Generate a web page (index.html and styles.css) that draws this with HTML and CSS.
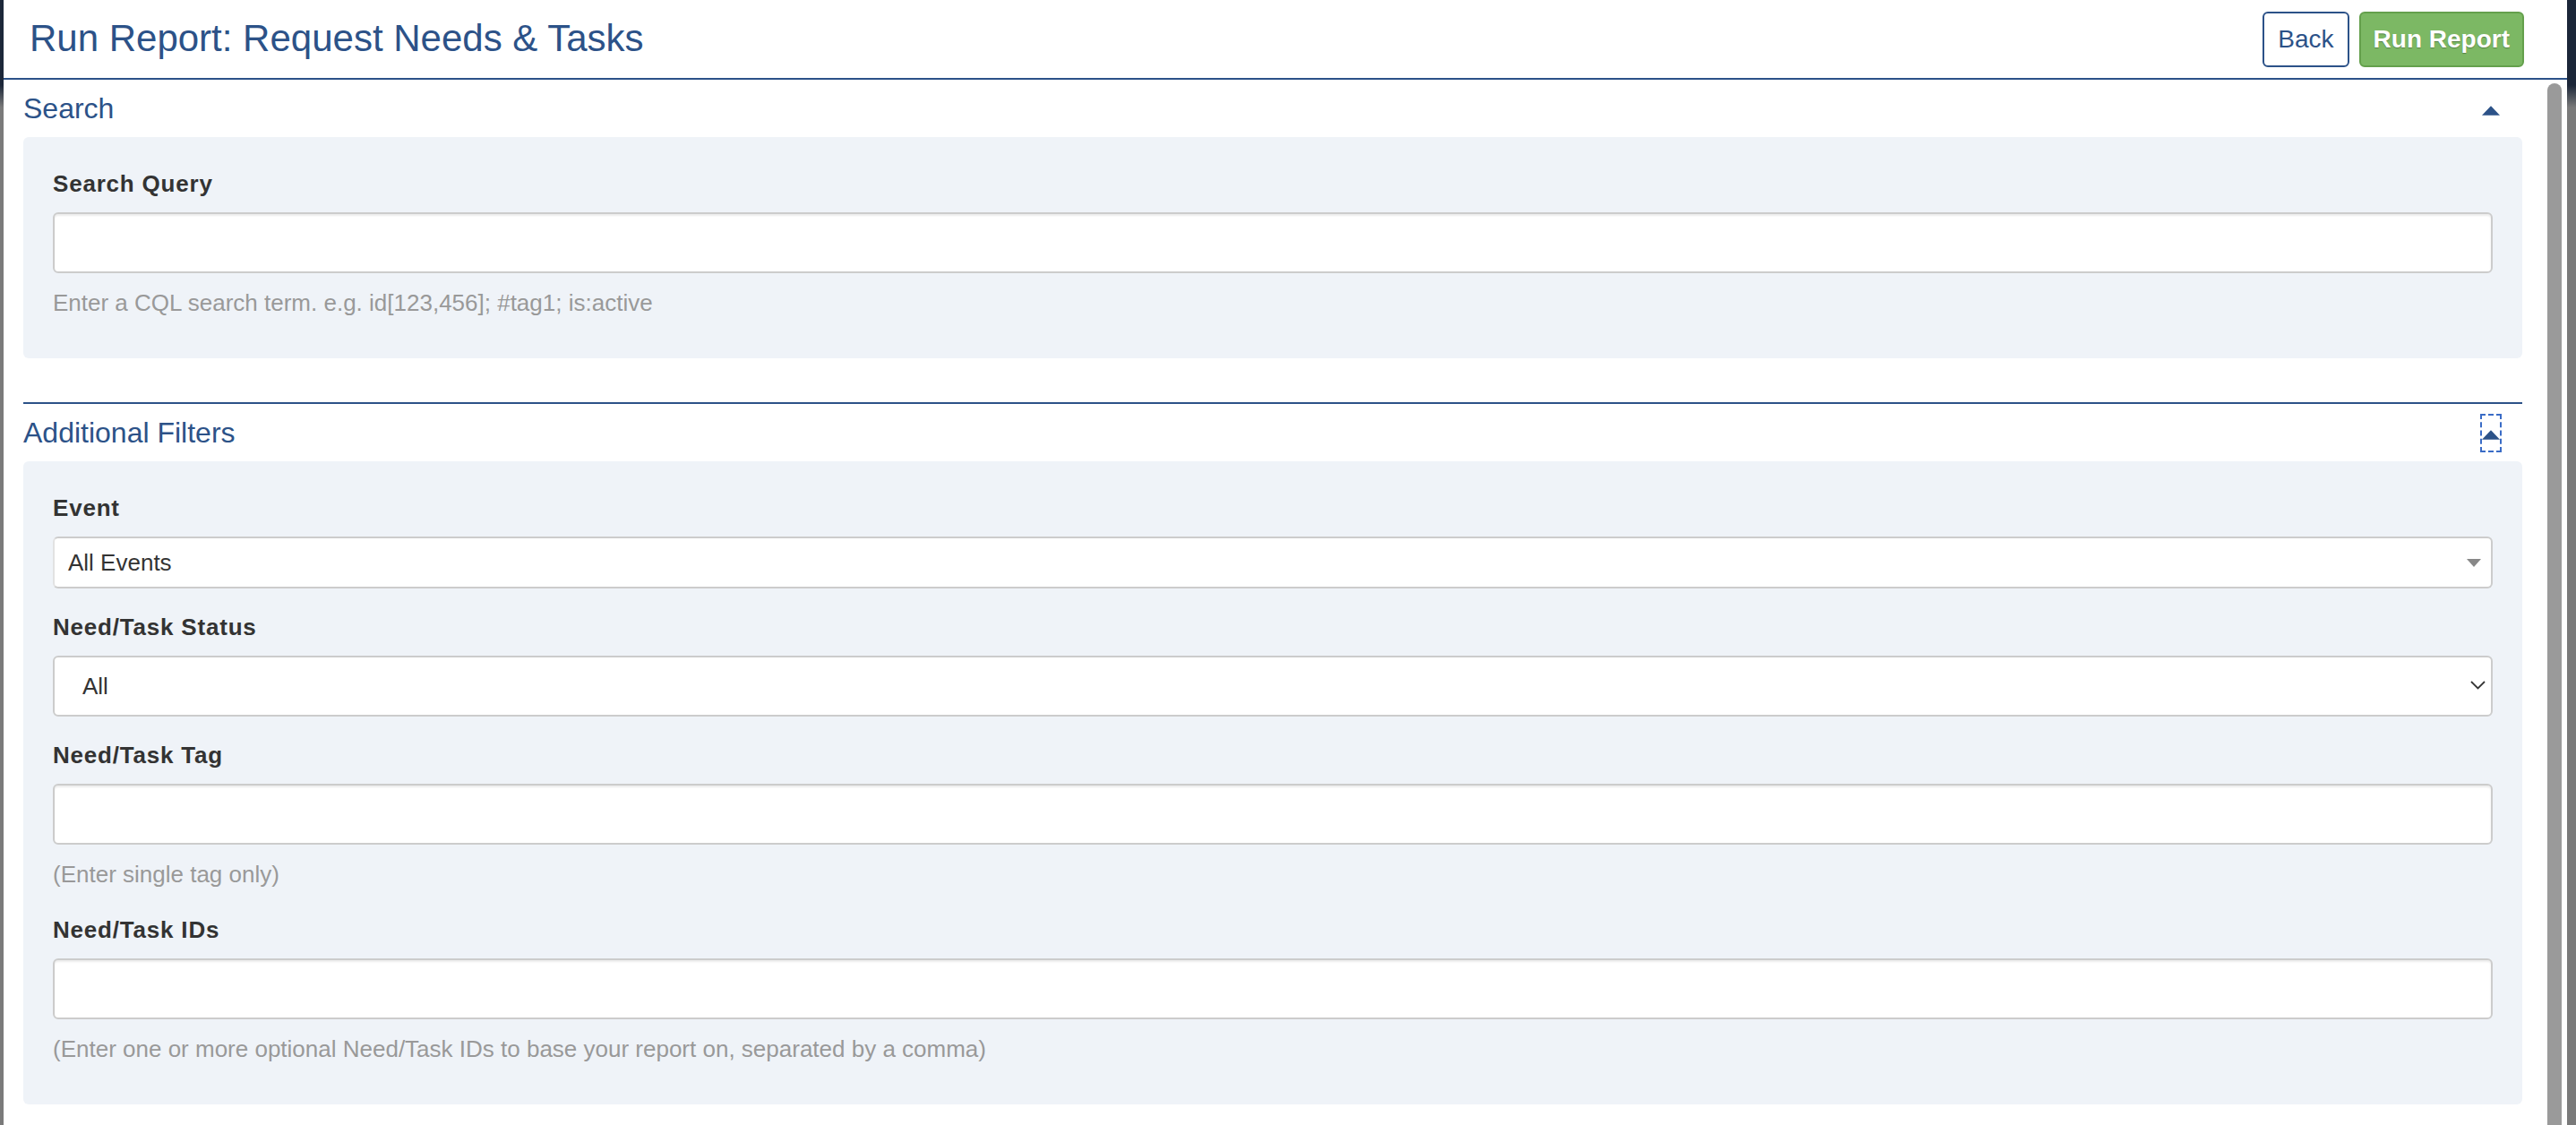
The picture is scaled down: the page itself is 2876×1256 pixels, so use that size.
FILE: index.html
```html
<!DOCTYPE html>
<html lang="en">
<head>
    <meta charset="UTF-8">
    <meta name="viewport" content="width=device-width, initial-scale=1.0">
    <title>Run Report: Request Needs &amp; Tasks</title>
    <link rel="stylesheet" href="styles.css">
</head>
<body>
    <div class="modal">
        <div class="modal-header">
            <h1 class="modal-title">Run Report: Request Needs &amp; Tasks</h1>
            <div class="header-actions">
                <button class="btn btn-back">Back</button>
                <button class="btn btn-run">Run Report</button>
            </div>
        </div>

        <div class="modal-body">
            <div class="content">
                <section class="section">
                    <div class="section-head">
                        <h2>Search</h2>
                        <button class="toggle" aria-label="Collapse">
                            <svg width="21" height="11" viewBox="0 0 21 11"><polygon points="0,11 10.5,0 21,11" fill="#2c5288"/></svg>
                        </button>
                    </div>
                    <div class="panel">
                        <div class="form-group">
                            <label for="query">Search Query</label>
                            <input id="query" class="field" type="text">
                            <p class="help">Enter a CQL search term. e.g. id[123,456]; #tag1; is:active</p>
                        </div>
                    </div>
                </section>

                <section class="section">
                    <div class="section-head">
                        <h2>Additional Filters</h2>
                        <button class="toggle focused" aria-label="Collapse">
                            <svg width="21" height="11" viewBox="0 0 21 11"><polygon points="0,11 10.5,0 21,11" fill="#2c5288"/></svg>
                        </button>
                    </div>
                    <div class="panel">
                        <div class="form-group">
                            <label>Event</label>
                            <div class="select2">
                                <span>All Events</span>
                                <svg width="16" height="9" viewBox="0 0 16 9"><polygon points="0,0 16,0 8,9" fill="#888"/></svg>
                            </div>
                        </div>

                        <div class="form-group">
                            <label for="status">Need/Task Status</label>
                            <div class="select-wrap">
                                <select id="status" class="field">
                                    <option>All</option>
                                </select>
                                <svg class="chevron" width="17" height="10" viewBox="0 0 17 10"><polyline points="1,1 8.5,8.5 16,1" fill="none" stroke="#333" stroke-width="1.8"/></svg>
                            </div>
                        </div>

                        <div class="form-group">
                            <label for="tag">Need/Task Tag</label>
                            <input id="tag" class="field" type="text">
                            <p class="help">(Enter single tag only)</p>
                        </div>

                        <div class="form-group">
                            <label for="ids">Need/Task IDs</label>
                            <input id="ids" class="field" type="text">
                            <p class="help">(Enter one or more optional Need/Task IDs to base your report on, separated by a comma)</p>
                        </div>
                    </div>
                </section>
            </div>

            <div class="scrollbar"><div class="thumb"></div></div>
        </div>
    </div>
</body>
</html>
```

FILE: styles.css
```css
html, body {
    height: 100%;
}

body {
    font-family: 'Liberation Sans', Arial, sans-serif;
    margin: 0;
    padding: 0;
    overflow: hidden;
    background: linear-gradient(#1c2739 0, #1c2739 95px, #7a7a7a 120px);
}

.modal {
    margin-left: 4px;
    width: 2862px;
    height: 100vh;
    background-color: #fff;
    display: flex;
    flex-direction: column;
}

.modal-header {
    height: 89px;
    flex-shrink: 0;
    box-sizing: border-box;
    display: flex;
    align-items: center;
    justify-content: space-between;
    padding: 0 48px 2px 29px;
    border-bottom: 2px solid #2c5288;
}

.modal-title {
    margin: 0;
    font-size: 42px;
    font-weight: normal;
    color: #2c5288;
}

.header-actions {
    display: flex;
    gap: 11px;
    margin-top: 2px;
}

.btn {
    height: 62px;
    padding: 0 14px;
    font-family: inherit;
    font-size: 28px;
    border-radius: 6px;
    cursor: pointer;
}

.btn-back {
    padding: 0 15px;
    background-color: #fff;
    color: #2c5288;
    border: 2px solid #2c5288;
}

.btn-run {
    background-color: #7cb864;
    color: #fff;
    font-weight: bold;
    border: 2px solid #64a04c;
    text-shadow: 0 1px 1px rgba(0, 0, 0, 0.3);
}

.modal-body {
    flex: 1;
    display: flex;
    min-height: 0;
}

.content {
    flex: 1;
    padding: 0 28px 0 22px;
}

.section + .section {
    margin-top: 49px;
    border-top: 2px solid #2c5288;
}

.section-head {
    height: 64px;
    display: flex;
    align-items: center;
    justify-content: space-between;
}

.section-head h2 {
    margin: 0;
    font-size: 32px;
    font-weight: normal;
    color: #2c5288;
}

.toggle {
    width: 24px;
    height: 43px;
    margin-right: 23px;
    padding: 4px 0 0;
    box-sizing: border-box;
    background: none;
    border: 2px dashed transparent;
    display: flex;
    align-items: center;
    justify-content: center;
    cursor: pointer;
}

.toggle.focused {
    border-color: #3a6cc6;
}

.panel {
    background-color: #eff3f8;
    border-radius: 6px;
    padding: 34px 33px 43px;
}

.form-group {
    margin-bottom: 25px;
}

.form-group:last-child {
    margin-bottom: 0;
}

.form-group label {
    display: block;
    font-size: 26px;
    font-weight: bold;
    letter-spacing: 0.8px;
    line-height: 37px;
    margin-bottom: 13px;
    color: #333;
}

.field {
    display: block;
    width: 100%;
    height: 68px;
    box-sizing: border-box;
    border: 2px solid #ccc;
    border-radius: 6px;
    background-color: #fff;
    box-shadow: inset 0 2px 2px rgba(0, 0, 0, 0.075);
    font-family: inherit;
    font-size: 26px;
    color: #333;
}

.help {
    margin: 15px 0 0;
    font-size: 26px;
    line-height: 37px;
    color: #999;
}

.select2 {
    height: 58px;
    box-sizing: border-box;
    border: 2px solid #ccc;
    border-left-color: #e2e2e2;
    border-radius: 6px;
    background-color: #fff;
    display: flex;
    align-items: center;
    justify-content: space-between;
    padding: 0 11px 0 15px;
    font-size: 26px;
    color: #333;
}

.select-wrap {
    position: relative;
}

.select-wrap select {
    appearance: none;
    -webkit-appearance: none;
    padding: 0 40px 0 31px;
    box-shadow: none;
}

.select-wrap .chevron {
    position: absolute;
    right: 8px;
    top: 28px;
    pointer-events: none;
}

.scrollbar {
    width: 16px;
    margin: 4px 6px 0 0;
}

.thumb {
    height: 100%;
    background-color: #9a9a9a;
    border-radius: 8px 8px 0 0;
}
```
